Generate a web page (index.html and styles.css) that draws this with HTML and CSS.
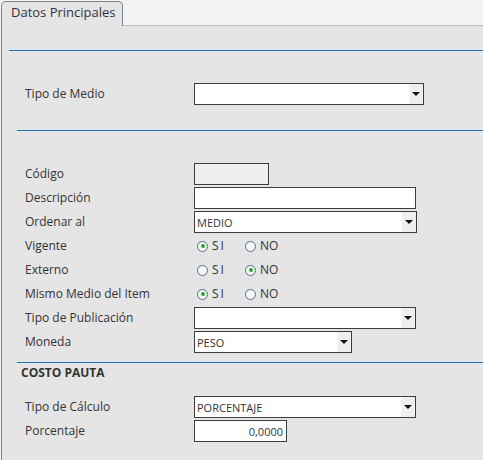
FILE: index.html
```html
<!DOCTYPE html>
<html lang="es">
<head>
<meta charset="utf-8">
<title>Datos Principales</title>
<link rel="stylesheet" href="styles.css">
</head>
<body>
<div class="page">
  <div class="tabs">
    <div class="tab">Datos Principales</div>
  </div>
  <div class="panel">
    <div class="rule rule-outer"></div>

    <div class="row row-medio">
      <span class="label">Tipo de Medio</span>
      <div class="select w230"><span class="value"></span><span class="arrow"></span></div>
    </div>

    <div class="rule rule-inner rule-2"></div>

    <div class="form">
      <div class="row">
        <span class="label">Código</span>
        <div class="input disabled w75"></div>
      </div>
      <div class="row">
        <span class="label">Descripción</span>
        <div class="input w222"></div>
      </div>
      <div class="row">
        <span class="label">Ordenar al</span>
        <div class="select w223"><span class="value">MEDIO</span><span class="arrow"></span></div>
      </div>
      <div class="row">
        <span class="label">Vigente</span>
        <div class="radios">
          <span class="radio checked"></span><span class="rtext">SI</span>
          <span class="radio"></span><span class="rtext">NO</span>
        </div>
      </div>
      <div class="row">
        <span class="label">Externo</span>
        <div class="radios">
          <span class="radio"></span><span class="rtext">SI</span>
          <span class="radio checked"></span><span class="rtext">NO</span>
        </div>
      </div>
      <div class="row">
        <span class="label">Mismo Medio del Item</span>
        <div class="radios">
          <span class="radio checked"></span><span class="rtext">SI</span>
          <span class="radio"></span><span class="rtext">NO</span>
        </div>
      </div>
      <div class="row">
        <span class="label">Tipo de Publicación</span>
        <div class="select w222"><span class="value"></span><span class="arrow"></span></div>
      </div>
      <div class="row">
        <span class="label">Moneda</span>
        <div class="select w158"><span class="value">PESO</span><span class="arrow"></span></div>
      </div>
    </div>

    <div class="rule rule-inner rule-3"></div>
    <h3 class="section-title">COSTO PAUTA</h3>

    <div class="form form-costo">
      <div class="row">
        <span class="label">Tipo de Cálculo</span>
        <div class="select w222"><span class="value">PORCENTAJE</span><span class="arrow"></span></div>
      </div>
      <div class="row">
        <span class="label">Porcentaje</span>
        <div class="input w93 num">0,0000</div>
      </div>
    </div>
  </div>
</div>
</body>
</html>
```

FILE: styles.css
```css
* { box-sizing: border-box; }

html, body {
  margin: 0;
  padding: 0;
  height: 100%;
}

body {
  background: #f3f3f3;
  font-family: "Open Sans", "Noto Sans", "DejaVu Sans", sans-serif;
  font-size: 12px;
  color: #333;
}

.page {
  margin-left: 1px;
  height: 100%;
  display: flex;
  flex-direction: column;
}

.tabs {
  height: 25px;
  display: flex;
  align-items: flex-end;
}

.tab {
  width: 122px;
  height: 25px;
  margin-top: 1px;
  border: 1px solid #78858e;
  border-bottom: none;
  border-radius: 5px 5px 0 0;
  background: #e5e5e5;
  color: #2f3340;
  font-size: 13px;
  line-height: 21px;
  padding-left: 9px;
  position: relative;
  top: 1px;
  z-index: 1;
}

.panel {
  flex: 1;
  background: #e5e5e5;
  border-left: 1px solid #78858e;
  border-top: 1px solid #b9bdc0;
  padding-bottom: 20px;
}

.rule {
  height: 0;
  border-top: 1px solid #1f74c2;
}

.rule-outer {
  margin-left: 7px;
  margin-top: 24px;
}

.rule-inner {
  margin-left: 15px;
}

.rule-2 { margin-top: 25px; }
.rule-3 { margin-top: 9px; }

.row {
  display: flex;
  align-items: center;
  height: 22px;
  padding-left: 23px;
  margin-bottom: 2px;
}

.row-medio {
  margin-top: 32px;
  margin-bottom: 0;
}

.form {
  margin-top: 32px;
}

.label {
  width: 169px;
  flex: none;
  color: #333;
  white-space: nowrap;
  padding-bottom: 2px;
}

.input,
.select {
  height: 22px;
  border: 1px solid #3c3c3c;
  background: #fff;
  font-size: 11px;
  color: #333;
  display: flex;
  align-items: center;
}

.input.disabled {
  background: #efefef;
}

.input.num {
  justify-content: flex-end;
  padding-right: 3px;
}

.select .value {
  flex: 1;
  padding-left: 2px;
}

.select .arrow {
  width: 14px;
  align-self: stretch;
  background: #efefef;
  display: flex;
  align-items: center;
  justify-content: center;
}

.select .arrow::after {
  content: "";
  width: 0;
  height: 0;
  border-left: 4px solid transparent;
  border-right: 4px solid transparent;
  border-top: 4px solid #111;
}

.w75 { width: 75px; }
.w93 { width: 93px; }
.w158 { width: 158px; }
.w222 { width: 222px; }
.w223 { width: 223px; }
.w230 { width: 230px; }

.radios {
  display: flex;
  align-items: center;
  padding-left: 3px;
}

.radio {
  width: 11px;
  height: 11px;
  border: 1px solid #4d6c8c;
  border-radius: 50%;
  background: #f7f7f7;
  position: relative;
  flex: none;
}

.radio.checked::after {
  content: "";
  position: absolute;
  left: 2.5px;
  top: 2.5px;
  width: 4px;
  height: 4px;
  border-radius: 50%;
  background: #22b022;
}

.rtext {
  width: 37px;
  padding-left: 4px;
  letter-spacing: 2px;
  font-size: 12px;
  color: #333;
  padding-bottom: 1px;
}

.rtext:last-child {
  width: auto;
  letter-spacing: 0;
}

.section-title {
  margin: 2px 0 0 0;
  padding-left: 19px;
  height: 16px;
  line-height: 15px;
  font-size: 12px;
  font-weight: bold;
  color: #333;
}

.form-costo {
  margin-top: 15px;
}
```
